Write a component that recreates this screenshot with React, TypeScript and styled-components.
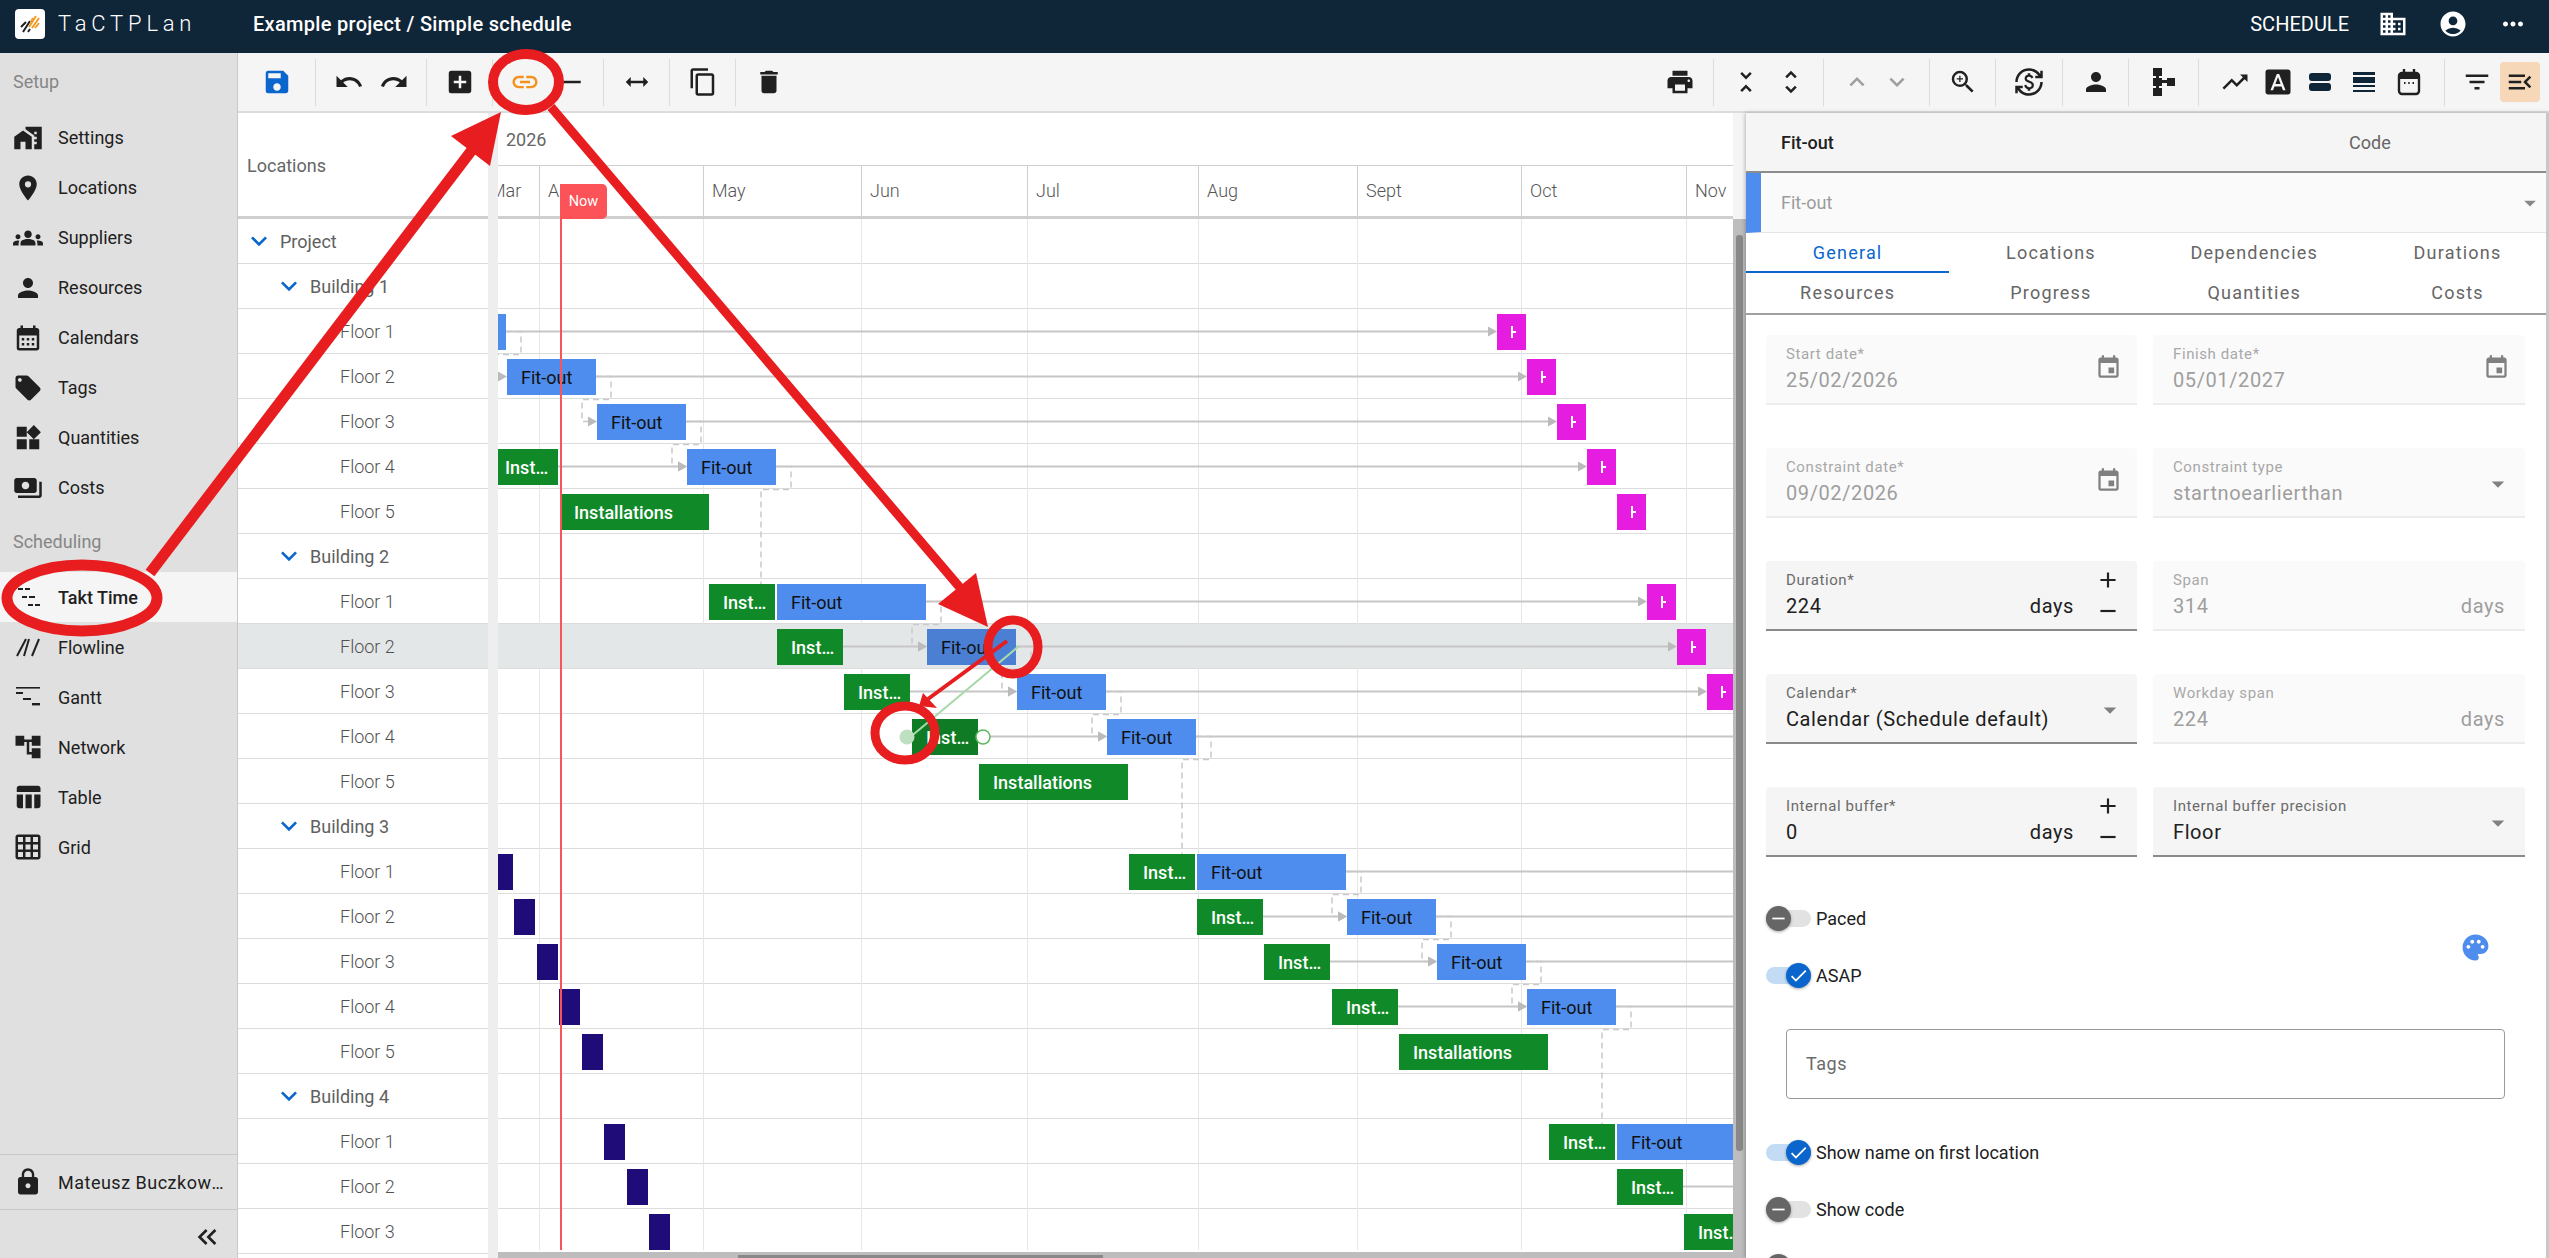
import React from "react";
import styled, { createGlobalStyle } from "styled-components";
import {
  MdAccountCircle, MdAccountTree, MdAdd, MdAddBox, MdArrowDropDown, MdCalendarMonth, MdCheck,
  MdContentCopy, MdCurrencyExchange, MdDelete, MdDomain, MdEvent, MdExpandMore, MdFilterList,
  MdFontDownload, MdGridOn, MdGroups, MdHeight, MdHomeWork, MdKeyboardArrowDown, MdKeyboardArrowUp,
  MdKeyboardDoubleArrowLeft, MdLink, MdLocalOffer, MdLock, MdMenuOpen, MdMoreHoriz, MdPalette,
  MdPayments, MdPerson, MdPlace, MdPrint, MdRedo, MdRemove, MdSave, MdTableChart, MdTrendingUp,
  MdUndo, MdUnfoldLess, MdUnfoldMore, MdWidgets, MdZoomIn,
} from "react-icons/md";

const CHART_X = 498;
const CHART_Y = 219;
const ROW_H = 45;

const GlobalStyle = createGlobalStyle`
  html, body { margin: 0; padding: 0; height: 100%; overflow: hidden; background: #fff; }
  body { font-family: Roboto, "Liberation Sans", sans-serif; }
  * { box-sizing: border-box; }
`;

const Page = styled.div`
  position: relative;
  display: flex;
  flex-direction: column;
  width: 2549px;
  height: 1258px;
  overflow: hidden;
`;

const Header = styled.header`
  flex: 0 0 53px;
  display: flex;
  align-items: center;
  padding: 0 21px 6px 15px;
  background: #0f2538;
  color: #fff;
`;

const LogoBox = styled.div`
  width: 30px;
  height: 30px;
  border-radius: 4px;
  background: #fff;
  display: flex;
  align-items: center;
  justify-content: center;
  margin-right: 13px;
`;

const Wordmark = styled.div`
  width: 195px;
  font-size: 22px;
  font-weight: 300;
  letter-spacing: 4.8px;
`;

const Title = styled.div`
  font-size: 20px;
  font-weight: 500;
  letter-spacing: 0.3px;
  flex: 1;
`;

const HeaderLabel = styled.div`
  font-size: 20px;
  margin-right: 29px;
`;

const HeaderIcon = styled.div`
  width: 30px;
  height: 30px;
  margin-left: ${(p: { $ml?: number }) => p.$ml ?? 0}px;
  font-size: 30px;
  display: flex;
`;

const Main = styled.div`
  flex: 1;
  display: flex;
  min-height: 0;
`;

const Sidebar = styled.nav`
  flex: 0 0 238px;
  display: flex;
  flex-direction: column;
  background: #e0e0e0;
  border-right: 1px solid #c8c8c8;
`;

const SectionLabel = styled.div`
  height: 59.5px;
  padding: 0 0 2px 13px;
  display: flex;
  align-items: center;
  font-size: 18px;
  color: #868686;
`;

const NavItem = styled.div<{ $active?: boolean }>`
  height: 50px;
  padding-left: 13px;
  display: flex;
  align-items: center;
  gap: 15px;
  font-size: 18px;
  font-weight: ${(p) => (p.$active ? 500 : 400)};
  color: #202020;
  background: ${(p) => (p.$active ? "#f5f5f5" : "transparent")};
  svg { flex: 0 0 30px; width: 30px; height: 30px; }
`;

const UserRow = styled(NavItem)`
  margin-top: auto;
  height: 56px;
  border-top: 1px solid #c8c8c8;
  border-bottom: 1px solid #c8c8c8;
  span { width: 173px; letter-spacing: 0.5px; overflow: hidden; white-space: nowrap; text-overflow: ellipsis; }
`;

const CollapseRow = styled.div`
  flex: 0 0 48px;
  display: flex;
  align-items: center;
  justify-content: flex-end;
  padding: 5px 14px 0 0;
  font-size: 32px;
  color: #202020;
`;

const Workspace = styled.div`
  flex: 1;
  display: flex;
  flex-direction: column;
  min-width: 0;
`;

const Toolbar = styled.div`
  flex: 0 0 60px;
  display: flex;
  align-items: center;
  background: #f5f5f5;
  border-bottom: 2px solid #dcdcdc;
`;

const ToolGroup = styled.div<{ $w: number; $last?: boolean }>`
  flex: 0 0 ${(p) => p.$w}px;
  height: 47px;
  display: flex;
  align-items: center;
  justify-content: center;
  border-right: ${(p) => (p.$last ? "none" : "1px solid #dcdcdc")};
`;

const ToolSpacer = styled.div`
  flex: 1;
`;

const ToolButton = styled.div<{ $w?: number; $color?: string; $active?: boolean }>`
  width: ${(p) => p.$w ?? 45}px;
  height: 40px;
  display: flex;
  align-items: center;
  justify-content: center;
  font-size: 30px;
  color: ${(p) => p.$color ?? "#202020"};
  background: ${(p) => (p.$active ? "#f6d7b8" : "transparent")};
  border-radius: 4px;
`;

const Body = styled.div`
  flex: 1;
  display: flex;
  min-height: 0;
`;

const LocationsCol = styled.div`
  flex: 0 0 250px;
  display: flex;
  flex-direction: column;
`;

const LocationsHead = styled.div`
  flex: 0 0 106px;
  display: flex;
  align-items: center;
  padding: 2px 0 0 9px;
  font-size: 18px;
  color: #666;
  border-bottom: 3px solid #cfcfcf;
`;

const TreeRow = styled.div<{ $level: number; $selected?: boolean }>`
  flex: 0 0 ${ROW_H}px;
  display: flex;
  align-items: center;
  padding-left: ${(p) => [5, 35, 102][p.$level]}px;
  font-size: 18px;
  font-weight: ${(p) => (p.$level === 2 ? 300 : 400)};
  color: ${(p) => (p.$level === 2 ? "#505050" : "#606060")};
  background: ${(p) => (p.$selected ? "#e4e7e8" : "transparent")};
  border-bottom: 1px solid #dcdcdc;
  svg { width: 32px; height: 32px; color: #0a66cc; margin-right: 5px; }
`;

const Splitter = styled.div`
  flex: 0 0 10px;
  background: #eeeeee;
`;

const Chart = styled.div`
  position: relative;
  flex: 0 0 1235px;
  display: flex;
  flex-direction: column;
  overflow: hidden;
`;

const YearRow = styled.div`
  flex: 0 0 53px;
  display: flex;
  align-items: center;
  padding-left: 8px;
  font-size: 18px;
  color: #666;
  border-bottom: 1px solid #cfcfcf;
`;

const MonthRow = styled.div`
  position: relative;
  flex: 0 0 53px;
  border-bottom: 3px solid #cfcfcf;
`;

const Month = styled.div<{ $x: number; $w: number }>`
  position: absolute;
  top: 0;
  bottom: 0;
  left: ${(p) => p.$x - CHART_X}px;
  width: ${(p) => p.$w}px;
  padding: 0 0 2px 8px;
  display: flex;
  align-items: center;
  font-size: 18px;
  font-weight: 300;
  color: #555;
  border-left: 1px solid #cfcfcf;
`;

const NowTag = styled.div`
  position: absolute;
  left: ${560 - CHART_X}px;
  top: 18px;
  width: 47px;
  height: 35px;
  background: #fb5357;
  border-radius: 0 5px 5px 0;
  color: #fff;
  font-size: 14.5px;
  display: flex;
  align-items: center;
  justify-content: center;
`;

const ChartBody = styled.div`
  position: relative;
  flex: 1;
`;

const GridLine = styled.div<{ $x: number }>`
  position: absolute;
  top: 0;
  bottom: 8px;
  left: ${(p) => p.$x - CHART_X}px;
  width: 1px;
  background: #e6e6e6;
  z-index: 1;
`;

const ChartRow = styled.div<{ $selected?: boolean }>`
  position: relative;
  height: ${ROW_H}px;
  background: ${(p) => (p.$selected ? "#e4e7e8" : "transparent")};
  border-bottom: 1px solid #dcdcdc;
`;

const Links = styled.svg`
  position: absolute;
  inset: 0;
  width: 1235px;
  height: 1039px;
  z-index: 2;
`;

const barColors: Record<string, string> = {
  fit: "#4e8ded",
  fitDark: "#4a7fd4",
  inst: "#108a28",
  instDark: "#0f7c25",
  navy: "#1f0c78",
  pink: "#e61ce0",
};

const Bar = styled.div<{ $x: number; $w: number; $kind: string }>`
  position: absolute;
  z-index: 3;
  top: 5px;
  height: 36px;
  left: ${(p) => p.$x - CHART_X}px;
  width: ${(p) => p.$w}px;
  padding: ${(p) => (p.$w > 40 ? "0 8px 0 14px" : "0")};
  background: ${(p) => barColors[p.$kind]};
  color: ${(p) => (p.$kind.startsWith("fit") ? "#111" : "#fff")};
  font-size: 18px;
  font-weight: ${(p) => (p.$kind.startsWith("inst") ? 500 : 400)};
  line-height: 37px;
  white-space: nowrap;
  overflow: hidden;
  text-overflow: ellipsis;
`;

const PinkMark = styled.i`
  position: absolute;
  left: 14px;
  top: 12px;
  width: 2px;
  height: 12px;
  background: #fff;
  &::after {
    content: "";
    position: absolute;
    left: 2px;
    top: 5px;
    width: 3px;
    height: 2px;
    background: #fff;
  }
`;

const NowLine = styled.div`
  position: absolute;
  left: ${560 - CHART_X}px;
  top: 0;
  bottom: 8px;
  width: 2px;
  background: #f8555a;
  z-index: 4;
`;

const HScroll = styled.div`
  position: absolute;
  left: 0;
  right: 0;
  bottom: 0;
  height: 6px;
  background: #bdbdbd;
  z-index: 5;
  &::after {
    content: "";
    position: absolute;
    left: ${738 - CHART_X}px;
    width: 365px;
    top: 3px;
    height: 3px;
    background: #888;
  }
`;

const VScroll = styled.div`
  flex: 0 0 13px;
  position: relative;
  background: linear-gradient(#f5f5f5 106px, #bdbdbd 106px);
  &::after {
    content: "";
    position: absolute;
    left: 3px;
    width: 7px;
    top: 122px;
    height: 916px;
    background: #888;
    border-radius: 3px;
  }
`;

const Panel = styled.aside`
  flex: 1;
  display: flex;
  flex-direction: column;
  min-width: 0;
  overflow: hidden;
  position: relative;
  border-right: 3px solid #c8c8c8;
  box-shadow: -1px 0 4px rgba(0, 0, 0, 0.25);
`;

const PanelHead = styled.div`
  flex: 0 0 60px;
  display: grid;
  grid-template-columns: 1fr 197px;
  align-items: center;
  padding: 1px 0 0 35px;
  background: #f5f5f5;
  border-bottom: 2px solid #8c8c8c;
  font-size: 18px;
`;

const PanelName = styled.div`
  font-weight: 500;
  color: #202020;
`;

const PanelCode = styled.div`
  color: #666;
`;

const TaskSelect = styled.div`
  flex: 0 0 60px;
  display: flex;
  align-items: center;
  padding: 0 2px 0 20px;
  background: #fafafa;
  border-left: 15px solid #4e8ded;
  border-bottom: 1px solid #e4e4e4;
  font-size: 18px;
  color: #9c9c9c;
  span { flex: 1; }
  svg { color: #888; width: 28px; height: 28px; }
`;

const Tabs = styled.div`
  flex: 0 0 81px;
  display: grid;
  grid-template-columns: repeat(4, 203.3px);
  grid-auto-rows: 40px;
  border-bottom: 2px solid #a0a0a0;
`;

const Tab = styled.div<{ $active?: boolean }>`
  display: flex;
  align-items: center;
  justify-content: center;
  font-size: 18px;
  letter-spacing: 1.2px;
  color: ${(p) => (p.$active ? "#0a66cc" : "#666")};
  border-bottom: 2px solid ${(p) => (p.$active ? "#0a66cc" : "transparent")};
`;

const Form = styled.div`
  padding: 20px 21px 0 20px;
  display: flex;
  flex-direction: column;
`;

const Fields = styled.div`
  display: grid;
  grid-template-columns: 371px 372px;
  column-gap: 16px;
  row-gap: 43px;
`;

const Field = styled.div<{ $disabled?: boolean }>`
  position: relative;
  height: 70px;
  padding: 9px 20px 0;
  background: ${(p) => (p.$disabled ? "#fafafa" : "#f5f5f5")};
  border-bottom: 2px solid ${(p) => (p.$disabled ? "#ececec" : "#8a8a8a")};
  border-radius: 4px 4px 0 0;
  color: ${(p) => (p.$disabled ? "#9e9e9e" : "#202020")};
`;

const FieldLabel = styled.div<{ $disabled?: boolean }>`
  font-size: 15px;
  letter-spacing: 0.6px;
  line-height: 20px;
  color: ${(p) => (p.$disabled ? "#a8a8a8" : "#6b6b6b")};
`;

const FieldValue = styled.div`
  margin-top: 3px;
  display: flex;
  justify-content: space-between;
  font-size: 20px;
  letter-spacing: 0.6px;
  line-height: 26px;
`;

const FieldUnit = styled.span<{ $pad?: boolean }>`
  margin-right: ${(p) => (p.$pad ? 43 : 0)}px;
`;

const FieldIcon = styled.div`
  position: absolute;
  right: 15px;
  top: 19px;
  font-size: 27px;
  display: flex;
  color: #808080;
`;

const FieldArrow = styled.div`
  position: absolute;
  right: 12px;
  top: 21px;
  font-size: 30px;
  display: flex;
  color: #808080;
`;

const Stepper = styled.div`
  position: absolute;
  right: 16px;
  top: 6px;
  bottom: 5px;
  display: flex;
  flex-direction: column;
  justify-content: space-between;
  font-size: 26px;
  color: #202020;
`;

const ToggleBlock = styled.div`
  display: flex;
  align-items: center;
  justify-content: space-between;
  margin-top: 33px;
  padding-right: 34px;
`;

const ToggleList = styled.div`
  display: flex;
  flex-direction: column;
`;

const ToggleRow = styled.div`
  height: 57px;
  display: flex;
  align-items: center;
  gap: 5px;
  font-size: 18px;
  color: #202020;
`;

const Track = styled.div<{ $on?: boolean }>`
  position: relative;
  width: 45px;
  height: 17px;
  border-radius: 9px;
  background: ${(p) => (p.$on ? "#c3dbf4" : "#e2e2e2")};
`;

const Thumb = styled.div<{ $on?: boolean }>`
  position: absolute;
  top: -4px;
  left: ${(p) => (p.$on ? 20 : 0)}px;
  width: 25px;
  height: 25px;
  border-radius: 50%;
  background: ${(p) => (p.$on ? "#0a66cc" : "#666")};
  box-shadow: 0 1px 3px rgba(0, 0, 0, 0.35);
  color: #fff;
  display: flex;
  align-items: center;
  justify-content: center;
  font-size: 21px;
`;

const PaletteIcon = styled.div`
  font-size: 31px;
  display: flex;
  color: #4e8ded;
`;

const TagsBox = styled.div`
  margin: 24.5px 0 25.5px 20px;
  width: 719px;
  height: 70px;
  padding: 0 19px;
  display: flex;
  align-items: center;
  border: 1px solid #9a9a9a;
  border-radius: 4px;
  font-size: 18px;
  letter-spacing: 0.5px;
  color: #6b6b6b;
`;

const Annotations = styled.svg`
  position: absolute;
  left: 0;
  top: 0;
  width: 2549px;
  height: 1258px;
  z-index: 10;
  pointer-events: none;
`;

type TBar = { x: number; e: number; kind: string; label?: string };

const fit = (x: number, e: number, kind = "fit"): TBar => ({ x, e, kind, label: e - x > 30 ? "Fit-out" : undefined });
const inst = (x: number, e: number, kind = "inst"): TBar => ({ x, e, kind, label: "Installations" });
const navy = (x: number, e: number): TBar => ({ x, e, kind: "navy" });
const pink = (x: number): TBar => ({ x, e: x + 29, kind: "pink" });

const rows: { label: string; level: number; selected?: boolean; bars: TBar[] }[] = [
  { label: "Project", level: 0, bars: [] },
  { label: "Building 1", level: 1, bars: [] },
  { label: "Floor 1", level: 2, bars: [fit(498, 506), pink(1497)] },
  { label: "Floor 2", level: 2, bars: [fit(507, 596), pink(1527)] },
  { label: "Floor 3", level: 2, bars: [fit(597, 686), pink(1557)] },
  { label: "Floor 4", level: 2, bars: [inst(491, 558), fit(687, 776), pink(1587)] },
  { label: "Floor 5", level: 2, bars: [inst(560, 709), pink(1617)] },
  { label: "Building 2", level: 1, bars: [] },
  { label: "Floor 1", level: 2, bars: [inst(709, 775), fit(777, 926), pink(1647)] },
  { label: "Floor 2", level: 2, selected: true, bars: [inst(777, 843), fit(927, 1016, "fitDark"), pink(1677)] },
  { label: "Floor 3", level: 2, bars: [inst(844, 910), fit(1017, 1106), pink(1707)] },
  { label: "Floor 4", level: 2, bars: [inst(912, 978, "instDark"), fit(1107, 1196)] },
  { label: "Floor 5", level: 2, bars: [inst(979, 1128)] },
  { label: "Building 3", level: 1, bars: [] },
  { label: "Floor 1", level: 2, bars: [navy(498, 513), inst(1129, 1195), fit(1197, 1346)] },
  { label: "Floor 2", level: 2, bars: [navy(514, 535), inst(1197, 1263), fit(1347, 1436)] },
  { label: "Floor 3", level: 2, bars: [navy(537, 558), inst(1264, 1330), fit(1437, 1526)] },
  { label: "Floor 4", level: 2, bars: [navy(559, 580), inst(1332, 1398), fit(1527, 1616)] },
  { label: "Floor 5", level: 2, bars: [navy(582, 603), inst(1399, 1548)] },
  { label: "Building 4", level: 1, bars: [] },
  { label: "Floor 1", level: 2, bars: [navy(604, 625), inst(1549, 1615), fit(1617, 1766)] },
  { label: "Floor 2", level: 2, bars: [navy(627, 648), inst(1617, 1683)] },
  { label: "Floor 3", level: 2, bars: [navy(649, 670), inst(1684, 1750)] },
];

const months: [string, number, number][] = [
  ["Mar", 481, 58], ["Apr", 539, 164], ["May", 703, 158], ["Jun", 861, 166], ["Jul", 1027, 171],
  ["Aug", 1198, 159], ["Sept", 1357, 164], ["Oct", 1521, 165], ["Nov", 1686, 60],
];

const centerY = (row: number) => CHART_Y + row * ROW_H + 22.5;

// solid links: row, from, to (arrow head is drawn when the target is on screen)
const solidLinks: [number, number, number, boolean][] = [
  [2, 506, 1497, true], [3, 596, 1527, true], [4, 686, 1557, true], [5, 776, 1587, true], [5, 558, 687, true],
  [8, 926, 1647, true], [9, 1016, 1677, true], [9, 843, 927, true], [10, 1106, 1707, true], [10, 910, 1017, true],
  [11, 1196, 1733, false], [11, 978, 1107, true],
  [14, 1346, 1733, false], [15, 1436, 1733, false], [15, 1263, 1347, true], [16, 1526, 1733, false], [16, 1330, 1437, true],
  [17, 1616, 1733, false], [17, 1398, 1527, true], [21, 1683, 1733, false],
];

// dashed finish-to-start links between locations: row, source end, target start
const stepLinks: [number, number, number][] = [
  [2, 506, 507], [3, 596, 597], [4, 686, 687], [8, 926, 927], [9, 1016, 1017], [10, 1106, 1107],
  [14, 1346, 1347], [15, 1436, 1437], [16, 1526, 1527],
];

// dashed links that drop onto the top of a bar further down
const dropLinks: [number, number, number, number][] = [
  [5, 791, 761, 8],
  [11, 1211, 1182, 14],
  [17, 1631, 1602, 20],
];

function TaktIcon() {
  return (
    <svg viewBox="0 0 30 30" fill="#202020">
      <rect x="5" y="6" width="5" height="2" />
      <rect x="12" y="6" width="5" height="2" />
      <rect x="9" y="14" width="5" height="2" />
      <rect x="16" y="14" width="6" height="2" />
      <rect x="15" y="22" width="5" height="2" />
      <rect x="22" y="22" width="5" height="2" />
    </svg>
  );
}

function FlowlineIcon() {
  return (
    <svg viewBox="0 0 30 30" stroke="#202020" strokeWidth="2" fill="none">
      <path d="M4 24 L13 7" />
      <path d="M11 24 L16 7" />
      <path d="M19 24 L26 7" />
    </svg>
  );
}

function GanttIcon() {
  return (
    <svg viewBox="0 0 30 30" fill="#202020">
      <rect x="3" y="5" width="24" height="1.6" />
      <rect x="3" y="10" width="7" height="2" />
      <rect x="10" y="16" width="8" height="2" />
      <rect x="19" y="21" width="8" height="2.4" />
    </svg>
  );
}

function TreeIcon() {
  return (
    <svg width="30" height="30" viewBox="0 0 30 30" fill="#202020">
      <rect x="4" y="1" width="9" height="8" />
      <rect x="4" y="11" width="9" height="8" />
      <rect x="4" y="21" width="9" height="8" />
      <rect x="18" y="11" width="8" height="8" />
      <rect x="7" y="8" width="3" height="14" />
      <rect x="12" y="13" width="7" height="3" />
    </svg>
  );
}

function RowsIcon() {
  return (
    <svg width="30" height="30" viewBox="0 0 30 30" fill="#0f2538">
      <rect x="4" y="6" width="22" height="8" rx="3" />
      <rect x="4" y="16" width="22" height="8" rx="3" />
    </svg>
  );
}

function LinesIcon() {
  return (
    <svg width="30" height="30" viewBox="0 0 30 30" fill="#0f2538">
      <rect x="4" y="5" width="22" height="3" />
      <rect x="4" y="10" width="22" height="6" />
      <rect x="4" y="18" width="22" height="2" />
      <rect x="4" y="23" width="22" height="2" />
    </svg>
  );
}

function ScheduleCalIcon() {
  return (
    <svg width="30" height="30" viewBox="0 0 30 30" fill="none" stroke="#202020" strokeWidth="2.4">
      <rect x="5" y="6" width="20" height="21" rx="3" />
      <path d="M5 9 H25" strokeWidth="6" />
      <path d="M10 2 V6 M20 2 V6" />
      <path d="M10 16 H11.5 M14.2 16 H15.7 M18.5 16 H20" strokeWidth="2" />
    </svg>
  );
}

function LogoMark() {
  return (
    <svg width="24" height="24" viewBox="0 0 24 24" fill="none" strokeWidth="2">
      <path d="M3 15 L8 10 M5 20 L12 9 M10 20 L12 17" stroke="#222" />
      <path d="M11 15 L18 4 M14 16 L21 6 M17 16 L21 11 M13 10 L15 6" stroke="#f39a26" />
    </svg>
  );
}

export default function App() {
  return (
    <Page>
      <GlobalStyle />
      <Header>
        <LogoBox><LogoMark /></LogoBox>
        <Wordmark>TaCTPLan</Wordmark>
        <Title>Example project / Simple schedule</Title>
        <HeaderLabel>SCHEDULE</HeaderLabel>
        <HeaderIcon><MdDomain /></HeaderIcon>
        <HeaderIcon $ml={30}><MdAccountCircle /></HeaderIcon>
        <HeaderIcon $ml={30}><MdMoreHoriz /></HeaderIcon>
      </Header>
      <Main>
        <Sidebar>
          <SectionLabel>Setup</SectionLabel>
          <NavItem><MdHomeWork />Settings</NavItem>
          <NavItem><MdPlace />Locations</NavItem>
          <NavItem><MdGroups />Suppliers</NavItem>
          <NavItem><MdPerson />Resources</NavItem>
          <NavItem><MdCalendarMonth />Calendars</NavItem>
          <NavItem><MdLocalOffer />Tags</NavItem>
          <NavItem><MdWidgets />Quantities</NavItem>
          <NavItem><MdPayments />Costs</NavItem>
          <SectionLabel>Scheduling</SectionLabel>
          <NavItem $active><TaktIcon />Takt Time</NavItem>
          <NavItem><FlowlineIcon />Flowline</NavItem>
          <NavItem><GanttIcon />Gantt</NavItem>
          <NavItem><MdAccountTree />Network</NavItem>
          <NavItem><MdTableChart />Table</NavItem>
          <NavItem><MdGridOn />Grid</NavItem>
          <UserRow><MdLock /><span>Mateusz Buczkowski</span></UserRow>
          <CollapseRow><MdKeyboardDoubleArrowLeft /></CollapseRow>
        </Sidebar>
        <Workspace>
          <Toolbar>
            <ToolGroup $w={78}><ToolButton $color="#0a66cc"><MdSave /></ToolButton></ToolGroup>
            <ToolGroup $w={111}><ToolButton><MdUndo /></ToolButton><ToolButton><MdRedo /></ToolButton></ToolGroup>
            <ToolGroup $w={66}><ToolButton><MdAddBox /></ToolButton></ToolGroup>
            <ToolGroup $w={111}><ToolButton $w={47} $color="#f5921e"><MdLink /></ToolButton><ToolButton $w={47}><MdRemove /></ToolButton></ToolGroup>
            <ToolGroup $w={66}><ToolButton><MdHeight style={{ transform: "rotate(90deg)" }} /></ToolButton></ToolGroup>
            <ToolGroup $w={66}><ToolButton><MdContentCopy /></ToolButton></ToolGroup>
            <ToolGroup $w={66} $last><ToolButton><MdDelete /></ToolButton></ToolGroup>
            <ToolSpacer />
            <ToolGroup $w={68}><ToolButton><MdPrint /></ToolButton></ToolGroup>
            <ToolGroup $w={110}><ToolButton><MdUnfoldLess /></ToolButton><ToolButton><MdUnfoldMore /></ToolButton></ToolGroup>
            <ToolGroup $w={106}><ToolButton $w={40} $color="#9e9e9e"><MdKeyboardArrowUp /></ToolButton><ToolButton $w={40} $color="#9e9e9e"><MdKeyboardArrowDown /></ToolButton></ToolGroup>
            <ToolGroup $w={66}><ToolButton><MdZoomIn /></ToolButton></ToolGroup>
            <ToolGroup $w={67}><ToolButton><MdCurrencyExchange /></ToolButton></ToolGroup>
            <ToolGroup $w={66}><ToolButton><MdPerson /></ToolButton></ToolGroup>
            <ToolGroup $w={70}><ToolButton><TreeIcon /></ToolButton></ToolGroup>
            <ToolGroup $w={246}>
              <ToolButton><MdTrendingUp /></ToolButton>
              <ToolButton $w={42}><MdFontDownload /></ToolButton>
              <ToolButton $w={42}><RowsIcon /></ToolButton>
              <ToolButton><LinesIcon /></ToolButton>
              <ToolButton><ScheduleCalIcon /></ToolButton>
            </ToolGroup>
            <ToolGroup $w={104} $last>
              <ToolButton><MdFilterList /></ToolButton>
              <ToolButton $w={40} $active><MdMenuOpen /></ToolButton>
            </ToolGroup>
          </Toolbar>
          <Body>
            <LocationsCol>
              <LocationsHead>Locations</LocationsHead>
              {rows.map((r, i) => (
                <TreeRow key={i} $level={r.level} $selected={r.selected}>
                  {r.level < 2 && <MdExpandMore />}
                  {r.label}
                </TreeRow>
              ))}
            </LocationsCol>
            <Splitter />
            <Chart>
              <YearRow>2026</YearRow>
              <MonthRow>
                {months.map(([m, x, w]) => (
                  <Month key={m} $x={x} $w={w}>{m}</Month>
                ))}
                <NowTag>Now</NowTag>
              </MonthRow>
              <ChartBody>
                {months.slice(1).map(([m, x]) => (
                  <GridLine key={m} $x={x} />
                ))}
                {rows.map((r, i) => (
                  <ChartRow key={i} $selected={r.selected}>
                    {r.bars.map((b, j) => (
                      <Bar key={j} $x={b.x} $w={b.e - b.x} $kind={b.kind}>
                        {b.kind === "pink" ? <PinkMark /> : b.label}
                      </Bar>
                    ))}
                  </ChartRow>
                ))}
                <Links viewBox={`${CHART_X} ${CHART_Y} 1235 1039`}>
                  {solidLinks.map(([r, a, b, arrow], i) => (
                    <g key={i}>
                      <line x1={a} y1={centerY(r)} x2={arrow ? b - 8 : b} y2={centerY(r)} stroke="#c6c6c6" strokeWidth="2" />
                      {arrow && <polygon points={`${b},${centerY(r)} ${b - 9},${centerY(r) - 5} ${b - 9},${centerY(r) + 5}`} fill="#bbbbbb" />}
                    </g>
                  ))}
                  {stepLinks.map(([r, a, b], i) => (
                    <g key={i}>
                      <path
                        d={`M${a} ${centerY(r)} H${a + 15} V${centerY(r) + 23} H${b - 15} V${centerY(r + 1)} H${b - 8}`}
                        fill="none"
                        stroke="#c9c9c9"
                        strokeWidth="1.5"
                        strokeDasharray="6 4"
                      />
                      <polygon points={`${b},${centerY(r + 1)} ${b - 9},${centerY(r + 1) - 5} ${b - 9},${centerY(r + 1) + 5}`} fill="#bbbbbb" />
                    </g>
                  ))}
                  {dropLinks.map(([r, a, b, to], i) => (
                    <path
                      key={i}
                      d={`M${a - 15} ${centerY(r)} H${a} V${centerY(r) + 23} H${b} V${CHART_Y + to * ROW_H + 5}`}
                      fill="none"
                      stroke="#c9c9c9"
                      strokeWidth="1.5"
                      strokeDasharray="6 4"
                    />
                  ))}
                </Links>
                <NowLine />
                <HScroll />
              </ChartBody>
            </Chart>
            <VScroll />
            <Panel>
              <PanelHead>
                <PanelName>Fit-out</PanelName>
                <PanelCode>Code</PanelCode>
              </PanelHead>
              <TaskSelect><span>Fit-out</span><MdArrowDropDown /></TaskSelect>
              <Tabs>
                <Tab $active>General</Tab>
                <Tab>Locations</Tab>
                <Tab>Dependencies</Tab>
                <Tab>Durations</Tab>
                <Tab>Resources</Tab>
                <Tab>Progress</Tab>
                <Tab>Quantities</Tab>
                <Tab>Costs</Tab>
              </Tabs>
              <Form>
                <Fields>
                  <Field $disabled>
                    <FieldLabel $disabled>Start date*</FieldLabel>
                    <FieldValue>25/02/2026</FieldValue>
                    <FieldIcon><MdEvent /></FieldIcon>
                  </Field>
                  <Field $disabled>
                    <FieldLabel $disabled>Finish date*</FieldLabel>
                    <FieldValue>05/01/2027</FieldValue>
                    <FieldIcon><MdEvent /></FieldIcon>
                  </Field>
                  <Field $disabled>
                    <FieldLabel $disabled>Constraint date*</FieldLabel>
                    <FieldValue>09/02/2026</FieldValue>
                    <FieldIcon><MdEvent /></FieldIcon>
                  </Field>
                  <Field $disabled>
                    <FieldLabel $disabled>Constraint type</FieldLabel>
                    <FieldValue>startnoearlierthan</FieldValue>
                    <FieldArrow><MdArrowDropDown /></FieldArrow>
                  </Field>
                  <Field>
                    <FieldLabel>Duration*</FieldLabel>
                    <FieldValue><span>224</span><FieldUnit $pad>days</FieldUnit></FieldValue>
                    <Stepper><MdAdd /><MdRemove /></Stepper>
                  </Field>
                  <Field $disabled>
                    <FieldLabel $disabled>Span</FieldLabel>
                    <FieldValue><span>314</span><FieldUnit>days</FieldUnit></FieldValue>
                  </Field>
                  <Field>
                    <FieldLabel>Calendar*</FieldLabel>
                    <FieldValue>Calendar (Schedule default)</FieldValue>
                    <FieldArrow><MdArrowDropDown /></FieldArrow>
                  </Field>
                  <Field $disabled>
                    <FieldLabel $disabled>Workday span</FieldLabel>
                    <FieldValue><span>224</span><FieldUnit>days</FieldUnit></FieldValue>
                  </Field>
                  <Field>
                    <FieldLabel>Internal buffer*</FieldLabel>
                    <FieldValue><span>0</span><FieldUnit $pad>days</FieldUnit></FieldValue>
                    <Stepper><MdAdd /><MdRemove /></Stepper>
                  </Field>
                  <Field>
                    <FieldLabel>Internal buffer precision</FieldLabel>
                    <FieldValue>Floor</FieldValue>
                    <FieldArrow><MdArrowDropDown /></FieldArrow>
                  </Field>
                </Fields>
                <ToggleBlock>
                  <ToggleList>
                    <ToggleRow><Track><Thumb><MdRemove /></Thumb></Track>Paced</ToggleRow>
                    <ToggleRow><Track $on><Thumb $on><MdCheck /></Thumb></Track>ASAP</ToggleRow>
                  </ToggleList>
                  <PaletteIcon><MdPalette /></PaletteIcon>
                </ToggleBlock>
                <TagsBox>Tags</TagsBox>
                <ToggleRow><Track $on><Thumb $on><MdCheck /></Thumb></Track>Show name on first location</ToggleRow>
                <ToggleRow><Track><Thumb><MdRemove /></Thumb></Track>Show code</ToggleRow>
                <ToggleRow><Track><Thumb><MdRemove /></Thumb></Track></ToggleRow>
              </Form>
            </Panel>
          </Body>
        </Workspace>
      </Main>
      <Annotations viewBox="0 0 2549 1258">
        <line x1="1019" y1="646" x2="908" y2="739" stroke="#a9d9aa" strokeWidth="2" />
        <circle cx="907" cy="737" r="7.5" fill="#bfe0c0" />
        <circle cx="983" cy="737" r="7" fill="#fff" stroke="#5cb85c" strokeWidth="1.5" />
        <ellipse cx="526" cy="82" rx="33" ry="28" fill="none" stroke="#e71d1f" strokeWidth="10" />
        <ellipse cx="82" cy="598" rx="75" ry="33" fill="none" stroke="#e71d1f" strokeWidth="11" />
        <ellipse cx="1013" cy="647" rx="25" ry="27" fill="none" stroke="#e71d1f" strokeWidth="9" />
        <ellipse cx="905" cy="733" rx="30" ry="27" fill="none" stroke="#e71d1f" strokeWidth="9" />
        <line x1="150" y1="573" x2="478" y2="142" stroke="#e71d1f" strokeWidth="11" />
        <polygon points="501,112 451,136 490,166" fill="#e71d1f" />
        <line x1="551" y1="107" x2="962" y2="590" stroke="#e71d1f" strokeWidth="9" />
        <polygon points="988,627 976,573 938,604" fill="#e71d1f" />
        <line x1="1007" y1="641" x2="928" y2="699" stroke="#e71d1f" strokeWidth="4" />
        <polygon points="919,706 923,693 937,708" fill="#e71d1f" />
      </Annotations>
    </Page>
  );
}
